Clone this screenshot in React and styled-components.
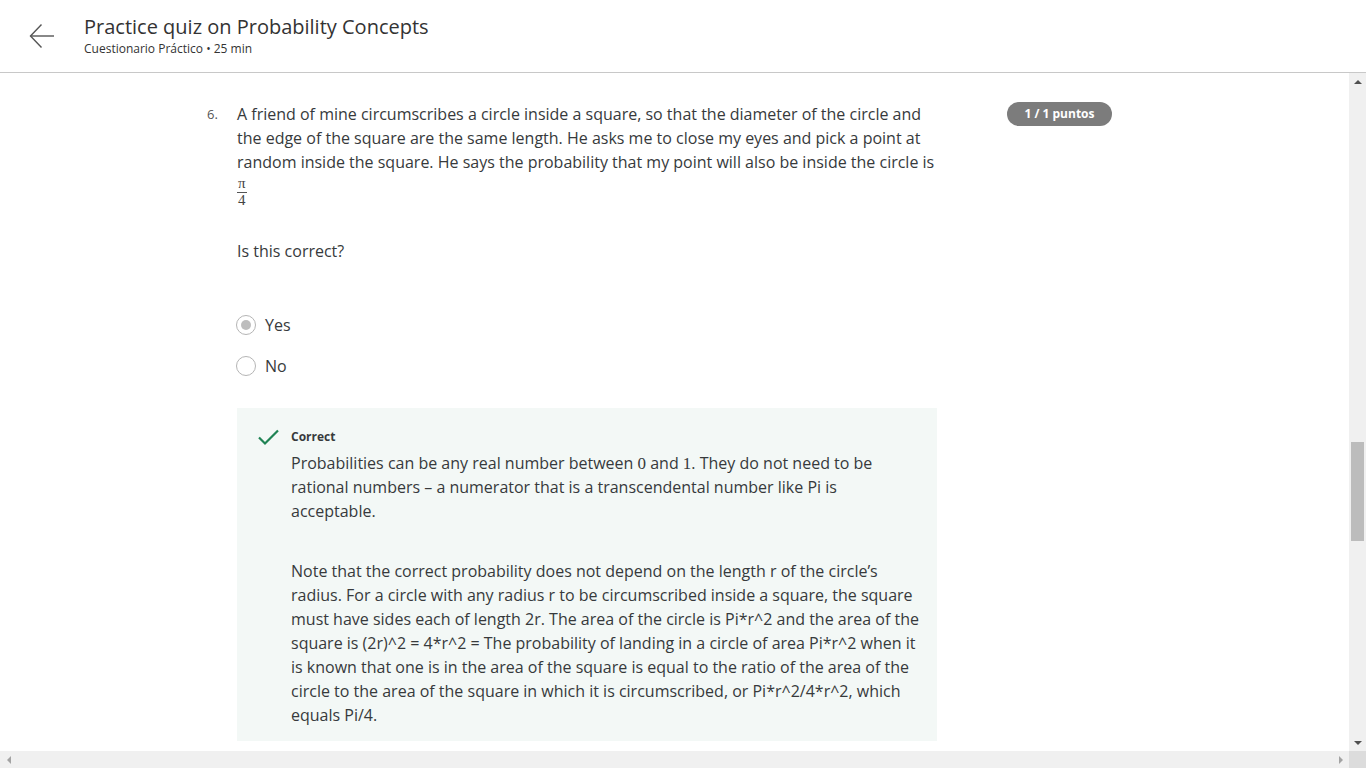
import React from 'react'
import styled, {createGlobalStyle} from 'styled-components'

const Global = createGlobalStyle`
  html, body {
    margin: 0;
    padding: 0;
    overflow: hidden;
    background: #fff;
  }
  body {
    font-family: "Open Sans", "Liberation Sans", sans-serif;
    color: #373a3c;
  }
`

const Page = styled.div`
  display: flex;
  flex-direction: column;
  width: 1366px;
  height: 768px;
`

const Header = styled.header`
  display: flex;
  align-items: center;
  height: 72px;
  border-bottom: 1px solid #c8c8c8;
  flex-shrink: 0;
`

const BackButton = styled.button`
  display: flex;
  align-items: center;
  justify-content: center;
  width: 28px;
  height: 28px;
  margin-left: 28px;
  margin-right: 28px;
  padding: 0;
  border: 0;
  background: none;
  color: #555;
`

const Titles = styled.div`
  display: flex;
  flex-direction: column;
  margin-top: -2px;
`

const Title = styled.h1`
  margin: 0;
  font-size: 20px;
  font-weight: 400;
  line-height: 28px;
  color: #333;
`

const Subtitle = styled.div`
  font-size: 12px;
  line-height: 16px;
  color: #333;
`

const Body = styled.div`
  display: flex;
  flex: 1;
  min-height: 0;
`

const Scroller = styled.main`
  flex: 1;
  overflow: hidden;
`

const Question = styled.section`
  display: grid;
  grid-template-columns: 30px 700px 70px 105px;
  padding: 29px 0 0 207px;
`

const Number = styled.div`
  font-size: 13px;
  line-height: 24px;
  color: #555;
`

const Prompt = styled.div`
  font-size: 16px;
  line-height: 24px;
  color: #373a3c;
`

const Text = styled.p`
  margin: 0;
`

const Fraction = styled.div`
  display: flex;
  flex-direction: column;
  align-items: center;
  width: fit-content;
  margin: 3px 0 0 0;
  font-family: "Liberation Serif", "DejaVu Serif", serif;
  font-size: 15px;
  line-height: 13px;
  color: #444;

  span:first-child {
    padding: 0 1px 2px;
    border-bottom: 1px solid #555;
  }
  span:last-child {
    padding-top: 1px;
  }
`

const Math = styled.span`
  font-family: "Liberation Serif", "DejaVu Serif", serif;
  font-size: 17px;
  line-height: 1;
`

const Ask = styled.p`
  margin: 32px 0 0 0;
`

const Options = styled.div`
  display: flex;
  flex-direction: column;
  gap: 17px;
  margin-top: 50px;
`

const Option = styled.label`
  display: flex;
  align-items: center;
  gap: 9px;
  font-size: 16px;
  line-height: 24px;
  color: #373a3c;
`

const Radio = styled.span`
  position: relative;
  width: 18px;
  height: 18px;
  margin-left: -1px;
  border: 1px solid #b5b5b5;
  border-radius: 50%;
  background: #fff;

  &::after {
    content: '';
    display: ${p => (p.$checked ? 'block' : 'none')};
    position: absolute;
    left: 4px;
    top: 4px;
    width: 10px;
    height: 10px;
    border-radius: 50%;
    background: #bdbdbd;
  }
`

const Feedback = styled.div`
  display: flex;
  gap: 12px;
  margin-top: 30px;
  padding: 20px 16px 14px 21px;
  background: #f3f8f6;
`

const Check = styled.div`
  width: 21px;
  color: #1f8354;
`

const FeedbackBody = styled.div`
  flex: 1;
`

const Label = styled.div`
  margin-bottom: 5px;
  font-size: 12px;
  font-weight: 700;
  line-height: 18px;
  color: #373a3c;
`

const Explanation = styled.p`
  margin: 0 0 36px 0;
  font-size: 16px;
  line-height: 24px;
  color: #373a3c;

  &:last-child {
    margin-bottom: 0;
  }
`

const Badge = styled.div`
  grid-column: 4;
  align-self: start;
  height: 24px;
  border-radius: 12px;
  background: #7c7c7c;
  color: #fff;
  font-size: 12px;
  font-weight: 700;
  line-height: 24px;
  text-align: center;
`

const VBar = styled.div`
  display: flex;
  flex-direction: column;
  align-items: center;
  width: 17px;
  background: #f0f0f0;
`

const Thumb = styled.div`
  width: 13px;
  height: 99px;
  margin-top: ${p => p.$offset}px;
  background: #bcbcbc;
`

const Arrow = styled.div`
  width: 0;
  height: 0;
  border-left: ${p => (p.$dir === 'up' || p.$dir === 'down' ? '4px solid transparent' : p.$dir === 'right' ? '4px solid #a3a3a3' : '0')};
  border-right: ${p => (p.$dir === 'up' || p.$dir === 'down' ? '4px solid transparent' : p.$dir === 'left' ? '4px solid #a3a3a3' : '0')};
  border-top: ${p => (p.$dir === 'down' ? '4px solid #505050' : p.$dir === 'up' ? '0' : '4px solid transparent')};
  border-bottom: ${p => (p.$dir === 'up' ? '4px solid #505050' : p.$dir === 'down' ? '0' : '4px solid transparent')};
`

const VArrowSlot = styled.div`
  display: flex;
  align-items: center;
  justify-content: center;
  height: 17px;
  margin-top: ${p => (p.$bottom ? 'auto' : '0')};
`

const HBar = styled.div`
  display: flex;
  align-items: center;
  height: 17px;
  flex-shrink: 0;
  background: #f0f0f0;
`

const HArrowSlot = styled.div`
  display: flex;
  align-items: center;
  justify-content: center;
  width: 17px;
  height: 17px;
  margin-left: ${p => (p.$end ? 'auto' : '0')};
`

const Corner = styled.div`
  width: 17px;
  height: 17px;
  background: #dcdcdc;
`

function BackArrow() {
  return (
    <svg width="26" height="26" viewBox="0 0 26 26" fill="none" stroke="currentColor" strokeWidth="1.4">
      <path d="M25 13H1.5" />
      <path d="M12.5 1.5L1.5 13L12.5 24.5" />
    </svg>
  )
}

function CheckMark() {
  return (
    <svg width="21" height="17" viewBox="0 0 21 17" fill="none" stroke="currentColor" strokeWidth="2.2">
      <path d="M1 8.5L7 14.5L20 1.5" />
    </svg>
  )
}

export default function App() {
  return (
    <Page>
      <Global />
      <Header>
        <BackButton aria-label="Back">
          <BackArrow />
        </BackButton>
        <Titles>
          <Title>Practice quiz on Probability Concepts</Title>
          <Subtitle>Cuestionario Práctico • 25 min</Subtitle>
        </Titles>
      </Header>
      <Body>
        <Scroller>
          <Question>
            <Number>6.</Number>
            <Prompt>
              <Text>
                A friend of mine circumscribes a circle inside a square, so that the diameter of the circle and
                the edge of the square are the same length. He asks me to close my eyes and pick a point at
                random inside the square. He says the probability that my point will also be inside the circle is
              </Text>
              <Fraction>
                <span>π</span>
                <span>4</span>
              </Fraction>
              <Ask>Is this correct?</Ask>
              <Options>
                <Option>
                  <Radio $checked />
                  Yes
                </Option>
                <Option>
                  <Radio />
                  No
                </Option>
              </Options>
              <Feedback>
                <Check>
                  <CheckMark />
                </Check>
                <FeedbackBody>
                  <Label>Correct</Label>
                  <Explanation>
                    Probabilities can be any real number between <Math>0</Math> and <Math>1</Math>. They do not need to be
                    rational numbers – a numerator that is a transcendental number like Pi is acceptable.
                  </Explanation>
                  <Explanation>
                    Note that the correct probability does not depend on the length r of the circle’s radius. For a
                    circle with any radius r to be circumscribed inside a square, the square must have sides each of
                    length 2r. The area of the circle is Pi*r^2 and the area of the square is (2r)^2 = 4*r^2 = The
                    probability of landing in a circle of area Pi*r^2 when it is known that one is in the area of the
                    square is equal to the ratio of the area of the circle to the area of the square in which it is
                    circumscribed, or Pi*r^2/4*r^2, which equals Pi/4.
                  </Explanation>
                </FeedbackBody>
              </Feedback>
            </Prompt>
            <Badge>1 / 1 puntos</Badge>
          </Question>
        </Scroller>
        <VBar>
          <VArrowSlot>
            <Arrow $dir="up" />
          </VArrowSlot>
          <Thumb $offset={352} />
          <VArrowSlot $bottom>
            <Arrow $dir="down" />
          </VArrowSlot>
        </VBar>
      </Body>
      <HBar>
        <HArrowSlot>
          <Arrow $dir="left" />
        </HArrowSlot>
        <HArrowSlot $end>
          <Arrow $dir="right" />
        </HArrowSlot>
        <Corner />
      </HBar>
    </Page>
  )
}
